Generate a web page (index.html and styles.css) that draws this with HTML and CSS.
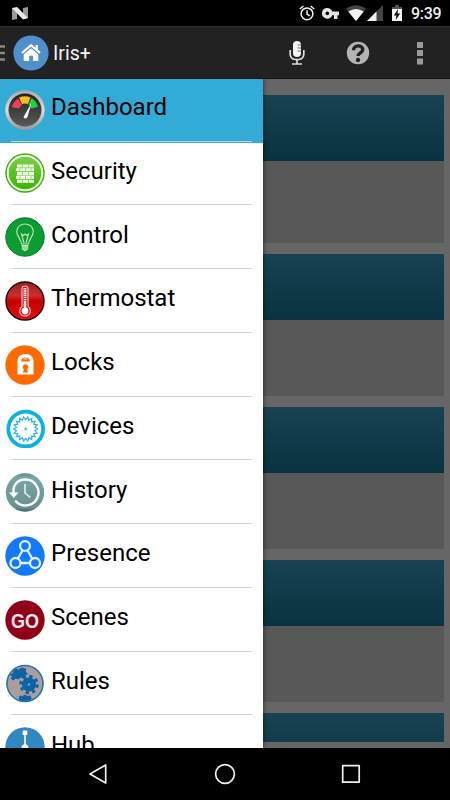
FILE: index.html
```html
<!DOCTYPE html>
<html lang="en">
<head>
  <meta charset="UTF-8">
  <meta name="viewport" content="width=device-width, initial-scale=1.0">
  <title>Iris+</title>
  <link rel="stylesheet" href="styles.css">
</head>
<body>
  <div class="status-bar">
    <svg class="logo-n" width="16" height="13" viewBox="0 0 16 13">
      <path d="M0 1l5 1v10l-5 1zM11 1l5-1v11l-5 1z" fill="#999"/>
      <path d="M0 1l5-1 11 11-5 1.500z" fill="#e8e8e8"/>
    </svg>
    <div class="status-icons">
      <svg width="16" height="16" viewBox="0 0 16 16" fill="none" stroke="#f2f2f2" stroke-width="1.500">
        <circle cx="8" cy="8.800" r="5.900"/>
        <path d="M8 5.300v3.900l2.800 1.700M.8 4L4.400 1M15.200 4L11.600 1"/>
      </svg>
      <svg class="key" width="17" height="11" viewBox="0 0 17 11">
        <path d="M5.300 0a5.300 5.300 0 1 0 4.900 7.300H12V11h3.500V7.300H17V3.500h-6.800A5.300 5.300 0 0 0 5.300 0zm0 3.600a1.800 1.800 0 1 1 0 3.600 1.800 1.800 0 0 1 0-3.600z" fill="#e4e4e4"/>
      </svg>
      <svg class="wifi" width="20" height="16" viewBox="0 0 20 16">
        <path d="M0 4Q10-3.500 20 4L10 16z" fill="#444"/>
        <path d="M2.300 6.500q7.700-5 15.400 0L10 16z" fill="#f2f2f2"/>
      </svg>
      <svg class="cell" width="16" height="16" viewBox="0 0 16 16">
        <path d="M16 0v16H0z" fill="#444"/>
        <path d="M9.500 6.500V16H0z" fill="#f2f2f2"/>
      </svg>
      <svg class="battery" width="10" height="16" viewBox="0 0 10 16">
        <path d="M3 0h4v2h3v2H0V2h3z" fill="#555"/>
        <path d="M0 4h10v12H0z" fill="#f2f2f2"/>
        <path d="M6 4L1.800 10.500h2.500L3.800 15 8.200 8.500H5.600z" fill="#111"/>
      </svg>
      <span class="clock">9:39</span>
    </div>
  </div>

  <header class="action-bar">
    <svg class="drawer-icon" width="5" height="18" viewBox="0 0 5 18">
      <path d="M0 2.500h5M0 9h5M0 15.500h5" stroke="#888" stroke-width="2.600"/>
    </svg>
    <svg class="home" width="36" height="36" viewBox="0 0 36 36">
      <circle cx="18" cy="18" r="17.600" fill="#4f8fce"/>
      <path d="M9 18l9-7.800 9 7.800M23.700 10v5" fill="none" stroke="#fff" stroke-width="2.300"/>
      <path d="M18 13.200l7.300 6.200V26h-5.200v-5.200h-3.900V26h-5.500v-6.600z" fill="#fff"/>
    </svg>
    <h1 class="title">Iris+</h1>
    <div class="actions">
      <svg width="16" height="26" viewBox="0 0 16 26">
        <rect x="4" y="1" width="8" height="16" rx="4" fill="#f4f4f4"/>
        <path d="M8.500 5h3.500M8.500 8h3.500M8.500 11h3.500" stroke="#777" stroke-width="1"/>
        <path d="M1.200 10v4.500q.5 4.500 5 5h3.600q4.500-.5 5-5V10M8 19.500v4M3 24h10" fill="none" stroke="#ddd" stroke-width="1.700"/>
      </svg>
      <svg class="help" width="24" height="24" viewBox="0 0 24 24">
        <circle cx="12" cy="12" r="11.200" fill="#b4b4b4"/>
        <path d="M7.500 9.200C7.500 3.500 16.800 3.600 16.800 8.600c0 3.100-4.700 3.500-4.700 6.400" fill="none" stroke="#222" stroke-width="3.400"/>
        <circle cx="12" cy="18.900" r="2.200" fill="#222"/>
      </svg>
      <svg width="6" height="24" viewBox="0 0 6 24">
        <path d="M0 1h6v6H0zM0 9h6v6H0zM0 17.500h6v6H0z" fill="#999"/>
      </svg>
    </div>
  </header>

  <main class="content">
    <div class="cards">
      <section class="card card-first"><div class="card-head"></div></section>
      <section class="card"><div class="card-head"></div></section>
      <section class="card"><div class="card-head"></div></section>
      <section class="card"><div class="card-head"></div></section>
      <section class="card card-last"></section>
    </div>

    <nav class="drawer">
      <a class="item selected">
        <svg class="icon" viewBox="0 0 40 40">
          <defs>
            <linearGradient id="metal" x2="0" y2="1"><stop stop-color="#aaa"/><stop offset=".5" stop-color="#ddd"/><stop offset="1" stop-color="#999"/></linearGradient>
            <linearGradient id="dial" x2="0" y2="1"><stop stop-color="#222"/><stop offset="1" stop-color="#5a5a5a"/></linearGradient>
          </defs>
          <circle cx="20" cy="20" r="19.700" fill="url(#metal)"/>
          <circle cx="20" cy="20" r="16.500" fill="url(#dial)"/>
          <path d="M6.500 17q2-5.500 6.500-8.500l4 6.500-3.500 3.500z" fill="#f23a5c"/>
          <path d="M14 7.500q6-2.500 11.500 0l-2.500 6.500q-3-1-6 0z" fill="#f5bd1f"/>
          <path d="M26.500 8q5 3 6.500 9l-6.500 1.500-3-4z" fill="#1fd044"/>
          <path d="M26.500 13L22.500 27q-2.500 3-4 0z" fill="#f4f4f4"/>
        </svg>
        <span>Dashboard</span>
      </a>
      <a class="item">
        <svg class="icon" viewBox="0 0 40 40">
          <defs><linearGradient id="lime" x2="0" y2="1"><stop stop-color="#7ed04b"/><stop offset="1" stop-color="#38b500"/></linearGradient></defs>
          <circle cx="20" cy="20" r="19.700" fill="#3aaa10"/>
          <circle cx="20" cy="20" r="17.300" fill="url(#lime)" stroke="#f2ffe9" stroke-width="2"/>
          <path d="M12 13h17M11 16.800h18M12 20.600h17M11 24.400h18M12 28.200h17" stroke="#f4ffed" stroke-width="3.100"/>
          <path d="M17.500 11.500v3M23.500 11.500v3M15 15.300v3M20.500 15.300v3M26 15.300v3M17.500 19v3M23.500 19v3M15 23v3M20.500 23v3M26 23v3M17.500 26.700v3M23.500 26.700v3" stroke="#79cf4c" stroke-width=".8"/>
        </svg>
        <span>Security</span>
      </a>
      <a class="item">
        <svg class="icon" viewBox="0 0 40 40">
          <circle cx="20" cy="20" r="19.200" fill="#0b9c32" stroke="#08702a"/>
          <path d="M16.500 27c0-5-4.800-7-4.800-12.500 0-10 16.600-10 16.600 0C28.300 20 23.500 22 23.500 27zM19 26l-2.500-9 2 1.500 1.500-1.500 1.500 1.500 2-1.500L21 26" fill="none" stroke="#b5e6a5" stroke-width="1.200"/>
          <path d="M16.800 28h6.400v4.500l-3.200 1.700-3.200-1.700z" fill="#d0efc5"/>
          <path d="M17 30h6M17 32h6" stroke="#3cac50" stroke-width=".7"/>
        </svg>
        <span>Control</span>
      </a>
      <a class="item">
        <svg class="icon" viewBox="0 0 40 40">
          <defs><linearGradient id="red" x2="0" y2="1"><stop stop-color="#992020"/><stop offset=".35" stop-color="#c83030"/><stop offset=".5" stop-color="#c90000"/><stop offset="1" stop-color="#df1212"/></linearGradient></defs>
          <circle cx="20" cy="20" r="19" fill="url(#red)" stroke="#240808" stroke-width="1.400"/>
          <path d="M17 25.500V8q0-3 3-3t3 3v17.500a5.300 5.300 0 1 1-6 0z" fill="none" stroke="#f7b5b5" stroke-width="1.200"/>
          <path d="M20 7v21" stroke="#ffe5e5" stroke-width="3" stroke-dasharray="1.500 .7"/>
          <path d="M20 20v9" stroke="#fff" stroke-width="2"/>
          <circle cx="20" cy="30" r="3.400" fill="#fff"/>
        </svg>
        <span>Thermostat</span>
      </a>
      <a class="item">
        <svg class="icon" viewBox="0 0 40 40">
          <circle cx="20" cy="20" r="19.700" fill="#ff6a00"/>
          <path d="M12.500 29.500V16c0-9.500 16-9.500 16 0v13.500z" fill="#fff"/>
          <path d="M16 16.500c0-5.500 9-5.500 9 0z" fill="#ff6a00"/>
          <path d="M18.500 14.500c0-2 4-2 4 0z" fill="#ffc299"/>
          <circle cx="20.500" cy="22" r="2.700" fill="#ff6a00"/>
          <path d="M19.500 22h2l1.500 5.500h-5z" fill="#ff6a00"/>
        </svg>
        <span>Locks</span>
      </a>
      <a class="item">
        <svg class="icon" viewBox="0 0 40 40">
          <circle cx="20.700" cy="21" r="17.400" fill="#fff" stroke="#0bb3dc" stroke-width="3.800"/>
          <g transform="translate(20.700 21)" fill="none" stroke="#28b5dc" stroke-width="1.200">
            <path id="teeth" d="M12.200 0L9.200 1.600 11.500 4.200 8.100 4.700 9.300 7.800 6 7.100 6.100 10.600 3.200 8.700 2.100 12 0 9.300-2.100 12-3.200 8.700-6.100 10.600-6 7.100-9.300 7.800-8.100 4.700-11.500 4.200-9.200 1.600-12.200 0"/>
            <use href="#teeth" transform="rotate(180)"/>
            <path d="M-1.500 0h3M0-1.500v3"/>
          </g>
        </svg>
        <span>Devices</span>
      </a>
      <a class="item">
        <svg class="icon" viewBox="0 0 40 40">
          <defs><linearGradient id="slate" x2="0" y2="1"><stop stop-color="#5e8585"/><stop offset=".1" stop-color="#7aa5a5"/><stop offset=".9" stop-color="#68908f"/><stop offset="1" stop-color="#395e5e"/></linearGradient></defs>
          <circle cx="20" cy="20.500" r="19.200" fill="url(#slate)"/>
          <path d="M8.500 21C7.500 12 14 7.500 20 7.500a13 13 0 1 1-9.800 21" fill="none" stroke="#fff" stroke-width="2.400"/>
          <path d="M4 20.500h9.500L8.800 26z" fill="#fff"/>
          <path d="M20 12v9l5.300 4.500" fill="none" stroke="#e5f0ef" stroke-width="1.600"/>
        </svg>
        <span>History</span>
      </a>
      <a class="item">
        <svg class="icon" viewBox="0 0 40 40">
          <circle cx="20" cy="20" r="19.700" fill="#1179fa"/>
          <g fill="none" stroke="#e5f1ff" stroke-width="2.300">
            <circle cx="20" cy="10" r="4.900"/>
            <circle cx="10.500" cy="27" r="5"/>
            <circle cx="30" cy="27" r="5"/>
            <path d="M17.500 14.500l-4.700 8M22.500 14.500l4.700 8M15.500 27h9.500"/>
          </g>
        </svg>
        <span>Presence</span>
      </a>
      <a class="item">
        <svg class="icon" viewBox="0 0 40 40">
          <circle cx="20" cy="20" r="19.700" fill="#900019"/>
          <text class="go" x="20" y="27.500" text-anchor="middle" textLength="28" lengthAdjust="spacingAndGlyphs">GO</text>
        </svg>
        <span>Scenes</span>
      </a>
      <a class="item">
        <svg class="icon" viewBox="0 0 40 40">
          <circle cx="20" cy="20.500" r="18.500" fill="#a99da0"/>
          <g fill="#0e62a5" stroke="#0e62a5">
            <circle cx="24" cy="21.500" r="7" stroke="none"/>
            <circle cx="24" cy="21.500" r="8" fill="none" stroke-width="3.500" stroke-dasharray="3.200 3.083"/>
            <path d="M6.500 16l1-3-2-1 3-2 1-4 4 1 3-2 4 1v3l2 2-3 1-1 3-3-1-2 2-3-1-2 2zM14 36l1-3 3 .5 1.500-1.500 3 1.500 3-.5.5 3-3 1.500h-7z"/>
          </g>
          <circle cx="24" cy="21.500" r="1.200" fill="#55b8de"/>
          <circle cx="20" cy="20.500" r="18" fill="none" stroke="#2377ad" stroke-width="1.600"/>
        </svg>
        <span>Rules</span>
      </a>
      <a class="item">
        <svg class="icon" viewBox="0 0 40 40">
          <circle cx="20" cy="20" r="19.700" fill="#3187c0"/>
          <path d="M17.700 3.500h4.600v4.500h-4.600zM19.200 8h1.600v9l2.500 2v6h-6.600v-6l2.500-2z" fill="#fff"/>
        </svg>
        <span>Hub</span>
      </a>
    </nav>
  </main>

  <footer class="nav-bar">
    <svg width="20" height="22" viewBox="0 0 20 22"><path d="M17.700 2v18L2 11z"/></svg>
    <svg width="22" height="22" viewBox="0 0 22 22"><circle cx="11" cy="11" r="9.400"/></svg>
    <svg width="20" height="20" viewBox="0 0 20 20"><rect x="1.700" y="1.700" width="16.500" height="16.500"/></svg>
  </footer>
</body>
</html>
```

FILE: styles.css
```css
body {
  margin: 0;
  height: 800px;
  display: flex;
  flex-direction: column;
  overflow: hidden;
  background: #000;
  color: #fff;
  font-family: Roboto, sans-serif;
}
svg {
  display: block;
  flex-shrink: 0;
}
.status-bar {
  height: 26px;
  box-sizing: border-box;
  padding: 0 9px 0 12px;
  display: flex;
  align-items: center;
  justify-content: space-between;
}
.status-icons {
  display: flex;
  align-items: center;
}
.key {
  margin-left: 7px;
}
.wifi {
  margin-left: 7px;
}
.cell {
  margin-left: 1px;
}
.battery {
  margin-left: 9px;
}
.clock {
  margin-left: 9px;
  padding-top: 2px;
  width: 30px;
  font-size: 16px;
  font-weight: 500;
  line-height: 20px;
  letter-spacing: -0.3px;
  color: #eee;
}
.action-bar {
  height: 53px;
  box-sizing: border-box;
  padding-right: 27px;
  display: flex;
  align-items: center;
  background: #222;
  border-top: 1px solid #303030;
  border-bottom: 1px solid #151515;
}
.home {
  margin-left: 8px;
}
.title {
  margin: 0 0 0 4px;
  padding-top: 1px;
  font-size: 19.5px;
  font-weight: 400;
  color: #f3f3f3;
}
.actions {
  margin-left: auto;
  width: 134px;
  display: flex;
  align-items: center;
  justify-content: space-between;
}
.help {
  margin-right: 6px;
}
.content {
  position: relative;
  height: 669px;
  overflow: hidden;
  background: #666;
}
.cards {
  padding: 16px 6px 0;
  display: flex;
  flex-direction: column;
  gap: 11px;
}
.card {
  height: 142px;
  background: #585858;
}
.card-first {
  height: 148px;
}
.card-head {
  height: 66px;
  background: linear-gradient(#184352, #0a3241);
}
.card-last {
  height: 29px;
  background: linear-gradient(#184352, #123c4a);
}
/* slides over the cards */
.drawer {
  position: absolute;
  top: 0;
  left: 0;
  bottom: 0;
  width: 263px;
  background: #fff;
  box-shadow: 0 0 5px rgba(0, 0, 0, 0.6);
  overflow: hidden;
}
.item {
  height: 63.75px;
  box-sizing: border-box;
  padding: 11px 11px 0 5px;
  display: flex;
  align-items: flex-start;
  background: linear-gradient(#d0d0d0, #d0d0d0) 11px 61.5px / 241px 1.3px no-repeat;
  color: #000;
  font-size: 24px;
  line-height: 34px;
}
.item span {
  margin-left: 6px;
}
.selected {
  background-color: #33abd7;
}
.icon {
  width: 40px;
  height: 40px;
  margin-top: -0.5px;
}
.go {
  font-family: "Liberation Sans", Arial, sans-serif;
  font-size: 21px;
  font-weight: 700;
  fill: #f5e9ec;
}
.nav-bar {
  height: 52px;
  box-sizing: border-box;
  padding: 0 89px 0 88px;
  display: flex;
  align-items: center;
  justify-content: space-between;
}
.nav-bar svg {
  fill: none;
  stroke: #eee;
  stroke-width: 1.7;
  stroke-linejoin: round;
}
```
